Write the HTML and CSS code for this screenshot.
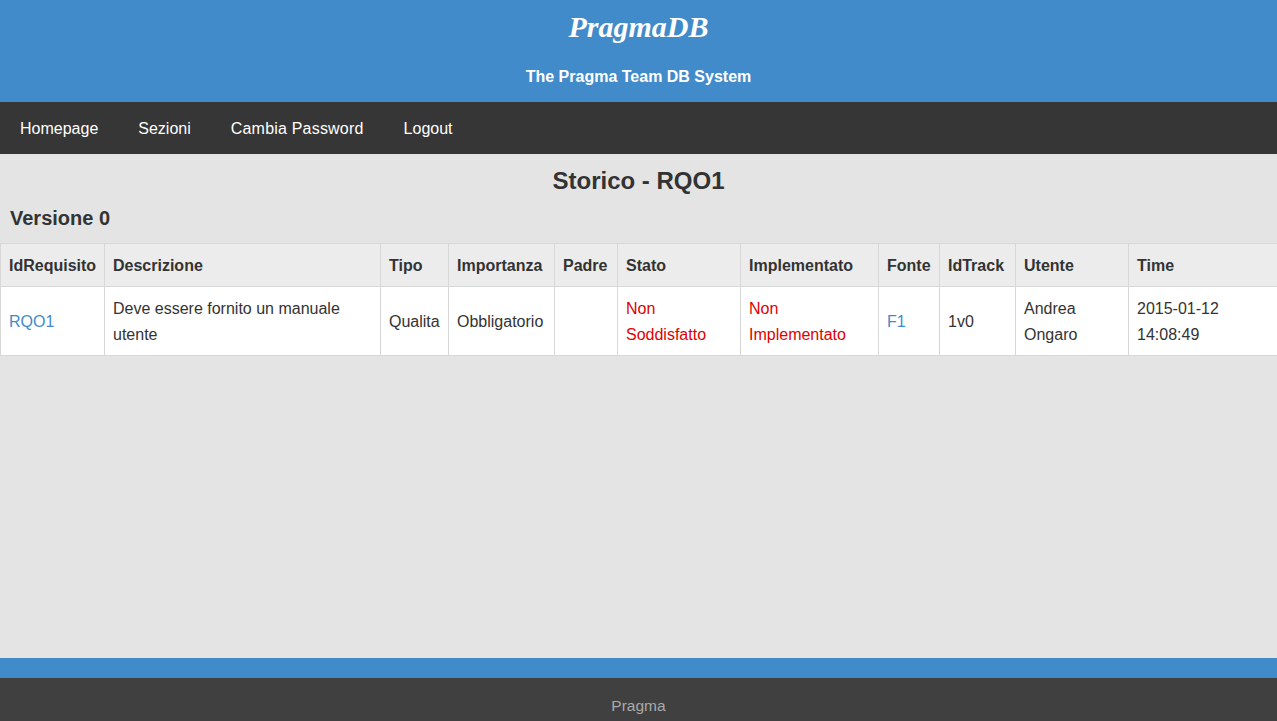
FILE: index.html
```html
<!DOCTYPE html>
<html>
<head>
<meta charset="utf-8">
<link rel="stylesheet" href="styles.css">
</head>
<body>
<div class="page">
  <header class="header">
    <h1 class="brand">PragmaDB</h1>
    <p class="tagline">The Pragma Team DB System</p>
  </header>
  <nav class="nav">
    <a href="#">Homepage</a>
    <a href="#">Sezioni</a>
    <a href="#">Cambia Password</a>
    <a href="#">Logout</a>
  </nav>
  <main class="content">
    <h2 class="title">Storico - RQO1</h2>
    <h3 class="version">Versione 0</h3>
    <table class="grid">
      <colgroup>
        <col class="c-id"><col class="c-desc"><col class="c-tipo"><col class="c-imp"><col class="c-padre"><col class="c-stato"><col class="c-impl"><col class="c-fonte"><col class="c-track"><col class="c-utente"><col class="c-time">
      </colgroup>
      <thead>
        <tr><th>IdRequisito</th><th>Descrizione</th><th>Tipo</th><th>Importanza</th><th>Padre</th><th>Stato</th><th>Implementato</th><th>Fonte</th><th>IdTrack</th><th>Utente</th><th>Time</th></tr>
      </thead>
      <tbody>
        <tr>
          <td><a href="#">RQO1</a></td>
          <td>Deve essere fornito un manuale utente</td>
          <td>Qualita</td>
          <td>Obbligatorio</td>
          <td></td>
          <td class="bad">Non Soddisfatto</td>
          <td class="bad">Non Implementato</td>
          <td><a href="#">F1</a></td>
          <td>1v0</td>
          <td>Andrea Ongaro</td>
          <td>2015-01-12 14:08:49</td>
        </tr>
      </tbody>
    </table>
  </main>
  <div class="strip"></div>
  <footer class="footer">Pragma</footer>
</div>
</body>
</html>
```
FILE: styles.css
```css
html, body { margin: 0; padding: 0; }
body {
  font-family: "Liberation Sans", Arial, sans-serif;
  color: #333;
  background: #e4e4e4;
  overflow: hidden;
}
.page {
  display: flex;
  flex-direction: column;
  height: 721px;
}
.header {
  background: #428bca;
  height: 102px;
  color: #fff;
  text-align: center;
  box-sizing: border-box;
  padding-top: 9px;
}
.brand {
  margin: 0;
  font-family: "Liberation Serif", "Times New Roman", serif;
  font-style: italic;
  font-weight: bold;
  font-size: 30px;
  line-height: 36px;
}
.tagline {
  margin: 23px 0 0;
  font-size: 16px;
  font-weight: bold;
  line-height: 18px;
}
.nav {
  background: #363636;
  height: 52px;
  display: flex;
  align-items: center;
  padding-left: 20px;
  gap: 40px;
}
.nav a {
  color: #fff;
  text-decoration: none;
  font-size: 16px;
  position: relative;
  top: 1px;
}
.nav a:nth-child(3) { letter-spacing: 0.2px; }
.content {
  flex: 1;
  background: #e4e4e4;
}
.title {
  margin: 12px 0 0;
  text-align: center;
  font-size: 24px;
  line-height: 30px;
  font-weight: bold;
}
.version {
  margin: 10px 0 0 10px;
  font-size: 20px;
  line-height: 24px;
  font-weight: bold;
}
.grid {
  margin-top: 13px;
  border-collapse: collapse;
  table-layout: fixed;
  width: 1277px;
  font-size: 16px;
  line-height: 26px;
}
.c-id { width: 104px; }
.c-desc { width: 276px; }
.c-tipo { width: 68px; }
.c-imp { width: 106px; }
.c-padre { width: 63px; }
.c-stato { width: 123px; }
.c-impl { width: 138px; }
.c-fonte { width: 61px; }
.c-track { width: 76px; }
.c-utente { width: 113px; }
.c-time { width: 149px; }
.grid th, .grid td {
  border: 1px solid #d8d8d8;
  padding: 8px;
  text-align: left;
  vertical-align: middle;
}
.grid th {
  background: #ececec;
  font-weight: bold;
  white-space: nowrap;
  padding-top: 9px;
  padding-bottom: 7px;
}
.grid td {
  background: #fff;
  padding-top: 9px;
  padding-bottom: 7px;
}
.grid th:last-child, .grid td:last-child { border-right: none; }
.grid a { color: #428bca; text-decoration: none; }
.grid .bad { color: #e00000; }
.strip {
  background: #428bca;
  height: 20px;
}
.footer {
  background: #404040;
  height: 43px;
  color: #aaa;
  font-size: 15.5px;
  text-align: center;
  box-sizing: border-box;
  padding-top: 19px;
}
```
